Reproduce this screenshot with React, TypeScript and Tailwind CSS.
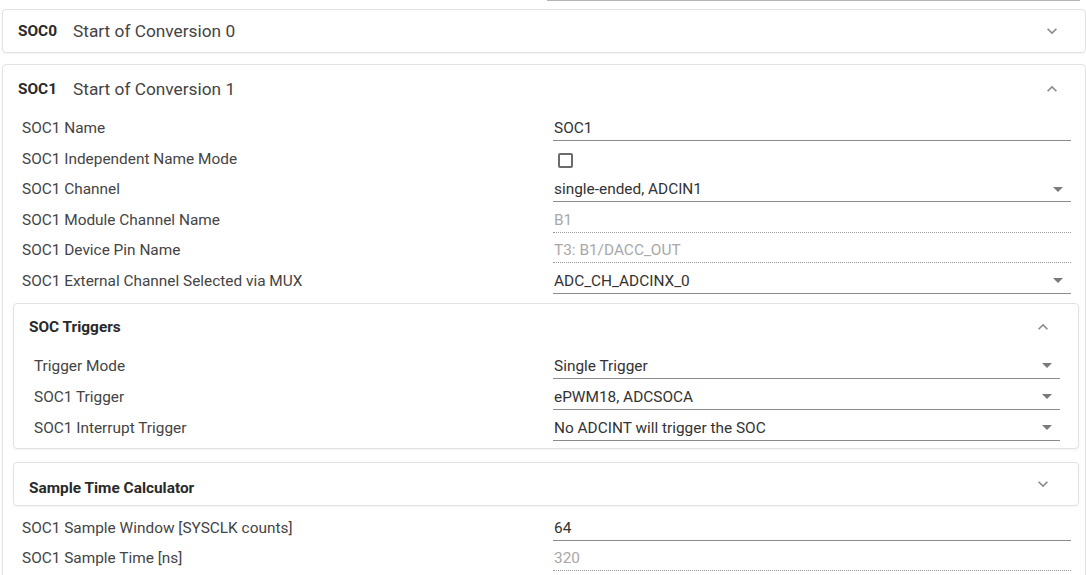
import React from "react";

const font = { fontFamily: "Roboto, 'Noto Sans', sans-serif" };

function Chevron({ up }: { up?: boolean }) {
  return (
    <svg width="20" height="20" viewBox="0 0 24 24" className="shrink-0">
      <path
        d={up ? "M7.41 15.41 12 10.83l4.59 4.58L18 14l-6-6-6 6z" : "M16.59 8.59 12 13.17 7.41 8.59 6 10l6 6 6-6z"}
        fill="#8a8a8a"
      />
    </svg>
  );
}

function Arrow() {
  return (
    <svg width="10" height="5" viewBox="0 0 10 5" className="shrink-0">
      <path d="M0 0h10L5 5z" fill="#7a7a7a" />
    </svg>
  );
}

type Kind = "text" | "select" | "disabled" | "checkbox";

function Row({ label, value, kind, inner }: { label: string; value?: string; kind: Kind; inner?: boolean }) {
  return (
    <div className={`flex h-[25px] ${inner ? "pl-[20px]" : "pl-[19px]"}`}>
      <div className={`${inner ? "w-[519px]" : "w-[531px]"} h-[24px] leading-[24px] text-[15.4px] text-[#444] whitespace-nowrap`}>
        {label}
      </div>
      {kind === "checkbox" ? (
        <div className={`${inner ? "w-[507px]" : "w-[518px]"} h-[25px] flex items-center pl-[5px] pt-[2px]`}>
          <div className="w-[15px] h-[15px] border-2 border-[#6b6b6b] rounded-[2px]" />
        </div>
      ) : (
        <div
          className={`${inner ? "w-[507px]" : "w-[518px]"} h-[25px] flex items-center justify-between pl-[1px] pr-[8px] border-b ${
            kind === "disabled" ? "border-dotted border-[#9a9a9a]" : "border-solid border-[#8c8c8c]"
          }`}
        >
          <span
            className={`h-[24px] leading-[24px] text-[15.4px] whitespace-nowrap ${
              kind === "disabled" ? "text-[#a8a8a8]" : "text-[#333]"
            }`}
          >
            {value}
          </span>
          {kind === "select" && <Arrow />}
        </div>
      )}
    </div>
  );
}

export default function App() {
  return (
    <div className="w-[1086px] h-[575px] overflow-hidden bg-white" style={font}>
      <div className="ml-[547px] w-[533px] h-px bg-[#b5b5b5]" />

      {/* SOC0 card */}
      <div className="mt-[8px] ml-[2px] w-[1084px] border border-[#e2e2e2] rounded-[4px] shadow-[0_1px_2px_rgba(0,0,0,0.05)]">
        <div className="h-[42px] flex items-center justify-between pl-[15px] pr-[23px]">
          <div className="flex items-center pt-[2px]">
            <span className="text-[15.4px] font-bold text-[#2a2a2a]">SOC0</span>
            <span className="ml-[16px] text-[17.3px] text-[#444]">Start of Conversion 0</span>
          </div>
          <Chevron />
        </div>
      </div>

      {/* SOC1 card */}
      <div className="mt-[11px] ml-[2px] w-[1084px] border border-[#e2e2e2] rounded-[4px] shadow-[0_1px_2px_rgba(0,0,0,0.05)] pb-[20px]">
        <div className="h-[48px] flex items-center justify-between pl-[15px] pr-[23px]">
          <div className="flex items-center pt-[2px]">
            <span className="text-[15.4px] font-bold text-[#2a2a2a]">SOC1</span>
            <span className="ml-[16px] text-[17.3px] text-[#444]">Start of Conversion 1</span>
          </div>
          <Chevron up />
        </div>

        <div className="pt-[3px] flex flex-col gap-[5.5px]">
          <Row label="SOC1 Name" value="SOC1" kind="text" />
          <Row label="SOC1 Independent Name Mode" kind="checkbox" />
          <Row label="SOC1 Channel" value="single-ended, ADCIN1" kind="select" />
          <Row label="SOC1 Module Channel Name" value="B1" kind="disabled" />
          <Row label="SOC1 Device Pin Name" value="T3: B1/DACC_OUT" kind="disabled" />
          <Row label="SOC1 External Channel Selected via MUX" value="ADC_CH_ADCINX_0" kind="select" />
        </div>

        {/* SOC Triggers */}
        <div className="mt-[9.5px] ml-[10px] w-[1066px] border border-[#e2e2e2] rounded-[4px] shadow-[0_1px_2px_rgba(0,0,0,0.05)] pb-[7px]">
          <div className="h-[46px] flex items-center justify-between pl-[15px] pr-[25px]">
            <span className="pt-[2px] text-[15.4px] font-bold text-[#2a2a2a]">SOC Triggers</span>
            <Chevron up />
          </div>
          <div className="pt-[3.5px] flex flex-col gap-[6px]">
            <Row inner label="Trigger Mode" value="Single Trigger" kind="select" />
            <Row inner label="SOC1 Trigger" value="ePWM18, ADCSOCA" kind="select" />
            <Row inner label="SOC1 Interrupt Trigger" value="No ADCINT will trigger the SOC" kind="select" />
          </div>
        </div>

        {/* Sample Time Calculator */}
        <div className="mt-[13.5px] ml-[10px] w-[1066px] border border-[#e2e2e2] rounded-[4px] shadow-[0_1px_2px_rgba(0,0,0,0.05)]">
          <div className="h-[42px] flex items-center justify-between pl-[15px] pr-[25px]">
            <span className="pt-[9px] text-[15.4px] font-bold text-[#2a2a2a]">Sample Time Calculator</span>
            <Chevron />
          </div>
        </div>

        <div className="pt-[9.5px] flex flex-col gap-[5px]">
          <Row label="SOC1 Sample Window [SYSCLK counts]" value="64" kind="text" />
          <Row label="SOC1 Sample Time [ns]" value="320" kind="disabled" />
        </div>
      </div>
    </div>
  );
}
